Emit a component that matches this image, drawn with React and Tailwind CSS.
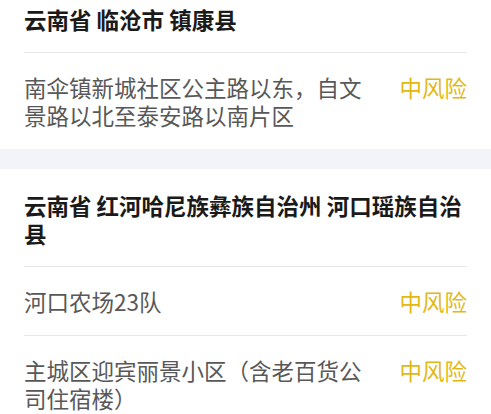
import React from "react";

const areas = [
  {
    title: "云南省 临沧市 镇康县",
    items: ["南伞镇新城社区公主路以东，自文景路以北至泰安路以南片区"],
  },
  {
    title: "云南省 红河哈尼族彝族自治州 河口瑶族自治县",
    items: ["河口农场23队", "主城区迎宾丽景小区（含老百货公司住宿楼）"],
  },
];

const AreaCard = ({ title, items, first }) => (
  <div className={`bg-white px-[24px] ${first ? "-mt-[17px]" : "mt-[20px]"}`}>
    <h2 className="pt-[22px] pb-[19px] text-[22.5px] leading-[28px] font-bold text-[#1a1a1a] border-b border-[#e8e8e8]">
      {title}
    </h2>
    {items.map((item, i) => (
      <div
        key={i}
        className={`flex items-start justify-between py-[20px] ${
          i < items.length - 1 ? "border-b border-[#e8e8e8]" : ""
        }`}
      >
        <div className="flex-1 pr-[30px] text-[22.5px] leading-[28px] text-[#585858]">
          {item}
        </div>
        <span className="shrink-0 text-[22.5px] leading-[28px] text-[#e2b914]">
          中风险
        </span>
      </div>
    ))}
  </div>
);

export default function App() {
  return (
    <div
      className="w-[491px] h-[414px] overflow-hidden bg-[#f2f4f8]"
      style={{ fontFamily: '"Noto Sans CJK SC", "Noto Sans", sans-serif' }}
    >
      {areas.map((a, i) => (
        <AreaCard key={i} first={i === 0} {...a} />
      ))}
    </div>
  );
}
